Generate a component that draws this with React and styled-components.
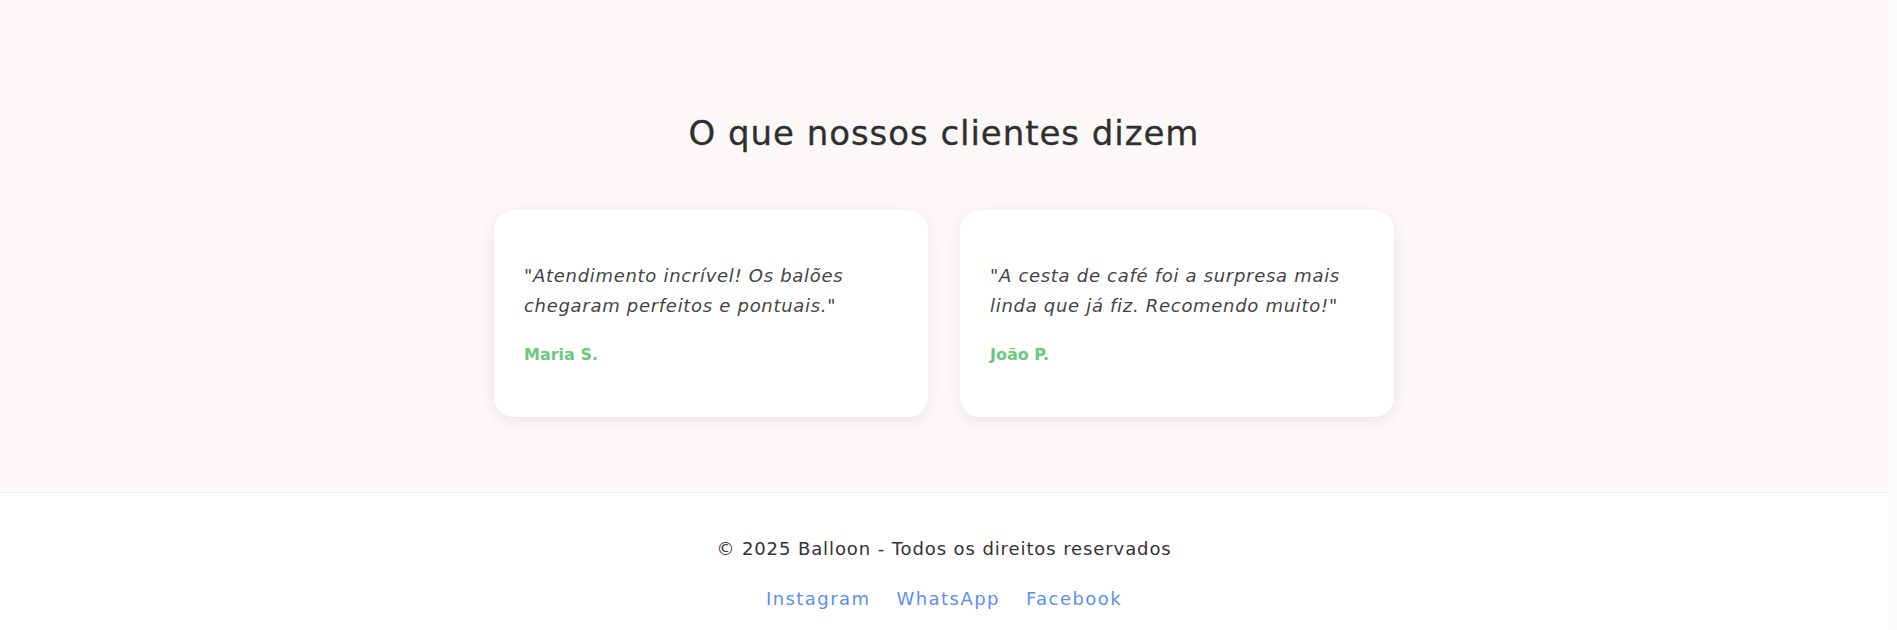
import React from 'react';
import styled, { createGlobalStyle } from 'styled-components';

const GlobalStyle = createGlobalStyle`
  * { box-sizing: border-box; }
  html { background: #fbfbfb; }
  body {
    margin: 0 9px 0 0;
    font-family: "DejaVu Sans", "Open Sans", sans-serif;
    color: #333;
    background: #fff;
  }
`;

const TESTIMONIALS = [
  { quote: '"Atendimento incrível! Os balões chegaram perfeitos e pontuais."', name: 'Maria S.' },
  { quote: '"A cesta de café foi a surpresa mais linda que já fiz. Recomendo muito!"', name: 'João P.' },
];

const LINKS = ['Instagram', 'WhatsApp', 'Facebook'];

const App = () => (
  <>
    <GlobalStyle />
    <Testimonials>
      <Title>O que nossos clientes dizem</Title>
      <CardGrid>
        {TESTIMONIALS.map((t) => (
          <Card key={t.name}>
            <Quote>{t.quote}</Quote>
            <Author>{t.name}</Author>
          </Card>
        ))}
      </CardGrid>
    </Testimonials>
    <Footer>
      <Copy>© 2025 Balloon - Todos os direitos reservados</Copy>
      <LinkRow>
        {LINKS.map((l) => (
          <FooterLink key={l} href="#">{l}</FooterLink>
        ))}
      </LinkRow>
    </Footer>
  </>
);

export default App;

const Testimonials = styled.section`
  background: #fcf8f7;
  padding: 112px 20px 75px;
  display: flex;
  flex-direction: column;
  align-items: center;
`;

const Title = styled.h2`
  margin: 0 0 56px;
  font-size: 34px;
  line-height: 42px;
  font-weight: 400;
  color: #2f2f2f;
  letter-spacing: 0.95px;
  -webkit-text-stroke: 0.3px #2f2f2f;
`;

const CardGrid = styled.div`
  display: grid;
  grid-template-columns: repeat(2, 434px);
  gap: 32px;
`;

const Card = styled.div`
  background: #fff;
  border-radius: 20px;
  box-shadow: 0 4px 15px rgba(0, 0, 0, 0.08);
  padding: 51px 30px 40px;
  height: 207px;
`;

const Quote = styled.p`
  margin: 0 0 24px;
  font-style: italic;
  font-size: 18px;
  line-height: 30px;
  letter-spacing: 0.7px;
  color: #444;
`;

const Author = styled.h4`
  margin: 0;
  font-size: 16px;
  font-weight: 600;
  color: #6bc97a;
`;

const Footer = styled.footer`
  border-top: 1px solid #f3eeee;
  padding: 42px 20px 30px;
  text-align: center;
`;

const Copy = styled.p`
  margin: 0 0 22px;
  font-size: 18px;
  line-height: 28px;
  letter-spacing: 0.9px;
  color: #333;
`;

const LinkRow = styled.div`
  display: flex;
  justify-content: center;
  gap: 26px;
`;

const FooterLink = styled.a`
  font-size: 18px;
  line-height: 28px;
  letter-spacing: 1.45px;
  color: #5b8ff7;
  text-decoration: none;
`;
